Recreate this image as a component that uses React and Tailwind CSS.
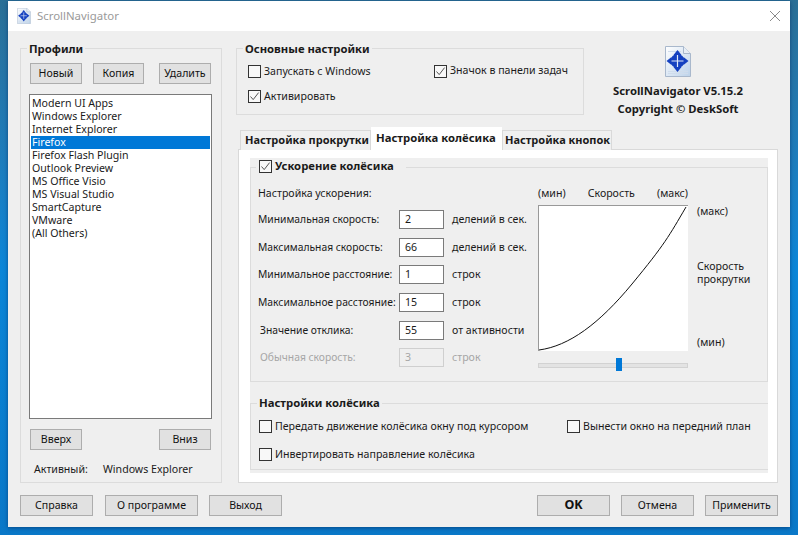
import React from 'react';

const profiles = [
  'Modern UI Apps',
  'Windows Explorer',
  'Internet Explorer',
  'Firefox',
  'Firefox Flash Plugin',
  'Outlook Preview',
  'MS Office Visio',
  'MS Visual Studio',
  'SmartCapture',
  'VMware',
  '(All Others)',
];

const speedRows = [
  { label: 'Минимальная скорость:', value: '2', unit: 'делений в сек.', top: 'mt-[10px]' },
  { label: 'Максимальная скорость:', value: '66', unit: 'делений в сек.', top: 'mt-[9px]' },
  { label: 'Минимальное расстояние:', value: '1', unit: 'строк', top: 'mt-[8px]' },
  { label: 'Максимальное расстояние:', value: '15', unit: 'строк', top: 'mt-[9px]' },
  { label: 'Значение отклика:', value: '55', unit: 'от активности', top: 'mt-[9px]', indent: true },
  { label: 'Обычная скорость:', value: '3', unit: 'строк', top: 'mt-[8px]', indent: true, disabled: true },
];

function Btn({ children, className = '', bold = false }) {
  return (
    <button
      className={`h-[21px] border border-[#adadad] bg-[#e1e1e1] text-[#111] flex items-center justify-center leading-none ${bold ? 'font-bold text-[12.5px]' : ''} ${className}`}
    >
      {children}
    </button>
  );
}

function Check({ checked, label, bold = false, className = '' }) {
  return (
    <div className={`flex items-center ${className}`}>
      <span className="w-[13px] h-[13px] border border-[#333] bg-[#f8f8f8] flex items-center justify-center shrink-0">
        {checked && (
          <svg width="11" height="11" viewBox="0 0 11 11" fill="none">
            <path d="M1.5 5.5 L4.2 8.6 L9.6 1.6" stroke="#555" strokeWidth="1" />
          </svg>
        )}
      </span>
      <span className={`ml-[3px] whitespace-nowrap ${bold ? 'font-bold' : ''}`}>{label}</span>
    </div>
  );
}

function AppIcon({ size = 26, height = 31, id = 'doc' }) {
  return (
    <svg className="shrink-0" width={size} height={height} viewBox="0 0 26 31">
      <defs>
        <linearGradient id={id} x1="0" y1="0" x2="1" y2="1">
          <stop offset="0" stopColor="#ffffff" />
          <stop offset="1" stopColor="#bcd2ea" />
        </linearGradient>
      </defs>
      <path d="M0.5 0.5 H18.5 L25.5 7.5 V30.5 H0.5 Z" fill={`url(#${id})`} stroke="#a9b8cc" />
      <path d="M18.5 0.5 V7.5 H25.5" fill="#e8eef5" stroke="#a9b8cc" />
      <path d="M3 5.5 H16 M3 25.5 H23 M3 27.5 H23" stroke="#cfdcec" strokeWidth="1" />
      {/* four arrows round a round hub */}
      <path d="M12.5 4 L16.5 9 H8.5 Z M12.5 26 L16.5 21 H8.5 Z M1.5 15 L6.5 11 V19 Z M23.5 15 L18.5 11 V19 Z" fill="#1541c0" />
      <circle cx="12.5" cy="15" r="7" fill="#1541c0" />
      <path d="M12.5 9 V21 M6.5 15 H18.5" stroke="#dfe8f8" strokeWidth="1.2" />
    </svg>
  );
}

function Group({ title, className = '', children }) {
  return (
    <div className={`border border-[#dcdcdc] ${className}`}>
      <div className="-mt-[7px] ml-[6px] w-fit px-[2px] bg-[#efefef] font-bold text-[11.3px] h-[16px] leading-[14px]">
        {title}
      </div>
      {children}
    </div>
  );
}

function SpeedRow({ row }) {
  const tone = row.disabled ? 'text-[#a6a6a6]' : 'text-[#1a1a1a]';
  return (
    <div className={`flex items-center h-[19px] ${row.top} ${tone}`}>
      <span className={`w-[141px] pt-px text-[10.3px] whitespace-nowrap ${row.indent ? 'pl-[2px]' : ''}`}>{row.label}</span>
      <span
        className={`w-[45px] h-[19px] border pl-[5px] leading-[17px] ${row.disabled ? 'border-[#cfcfcf] bg-[#efefef]' : 'border-[#7a7a7a] bg-white'}`}
      >
        {row.value}
      </span>
      <span className="ml-[8px] pt-px whitespace-nowrap">{row.unit}</span>
    </div>
  );
}

export default function App() {
  return (
    <div className="w-[798px] h-[535px] overflow-hidden bg-gradient-to-b from-[#2a6f96] via-[#0b86d8] to-[#0a78c8] pt-px pl-2 text-[10.6px] text-[#1a1a1a] font-['Noto_Sans','Open_Sans',sans-serif]">
      <div className="w-[782px] h-[526px] flex flex-col shadow-[0_1px_4px_rgba(0,40,90,0.6)]">
        {/* Title bar */}
        <div className="h-[30px] shrink-0 bg-white flex items-center pl-[9px] pr-[9px]">
          <AppIcon size={14} height={16} id="docSmall" />
          <span className="ml-[6px] text-[11.4px] text-[#9a9a9a]">ScrollNavigator</span>
          <svg className="ml-auto" width="12" height="12" viewBox="0 0 12 12" fill="none">
            <path d="M1 1 L11 11 M11 1 L1 11" stroke="#8a8a8a" strokeWidth="1" />
          </svg>
        </div>

        <div className="flex-1 bg-[#efefef] pl-3 pt-[17px]">
          <div className="flex h-[435px]">
            {/* Profiles */}
            <Group title="Профили" className="w-[202px] h-[435px]">
              <div className="pl-[9px]">
                <div className="flex mt-[5px]">
                  <Btn className="w-[52px]">Новый</Btn>
                  <Btn className="w-[51px] ml-[11px]">Копия</Btn>
                  <Btn className="w-[52px] ml-[15px]">Удалить</Btn>
                </div>
                <div className="w-[183px] h-[325px] -ml-px mt-[10px] border border-[#7a7a7a] bg-white py-[2px] px-px">
                  {profiles.map((p) => (
                    <div
                      key={p}
                      className={`h-[13px] leading-[13px] pl-px ${p === 'Firefox' ? 'bg-[#0078d7] text-white' : ''}`}
                    >
                      {p}
                    </div>
                  ))}
                </div>
                <div className="flex justify-between w-[181px] mt-[10px]">
                  <Btn className="w-[52px]">Вверх</Btn>
                  <Btn className="w-[52px]">Вниз</Btn>
                </div>
                <div className="flex mt-[12px] pl-[4px]">
                  <span className="w-[69px]">Активный:</span>
                  <span>Windows Explorer</span>
                </div>
              </div>
            </Group>

            {/* Right column */}
            <div className="ml-[14px] w-[542px] flex flex-col">
              <div className="flex h-[67px]">
                <Group title="Основные настройки" className="w-[348px] h-[67px]">
                  <div className="flex pl-[11px] mt-[6px]">
                    <div className="w-[186px]">
                      <Check label="Запускать с Windows" />
                      <Check checked label="Активировать" className="mt-[9px]" />
                    </div>
                    <Check checked label="Значок в панели задач" className="h-[16px] -mt-px" />
                  </div>
                </Group>
                <div className="flex-1 flex flex-col items-center pr-[6px] -mt-[2px] font-bold text-[11.3px]">
                  <AppIcon id="docLarge" />
                  <div className="mt-[5px] h-[18px] shrink-0 leading-[18px] whitespace-nowrap">ScrollNavigator V5.15.2</div>
                  <div className="h-[18px] shrink-0 leading-[18px] whitespace-nowrap">Copyright © DeskSoft</div>
                </div>
              </div>

              {/* Tabs */}
              <div className="flex items-end h-[23px] ml-[4px] mt-[12px] relative z-10 font-bold text-[11px]">
                <div className="w-[131px] h-[20px] border border-[#d9d9d9] border-b-0 bg-[#f0f0f0] pl-[4px] leading-[18px] whitespace-nowrap">Настройка прокрутки</div>
                <div className="w-[131px] h-[23px] bg-white pl-[5px] leading-[22px] text-[11.3px] whitespace-nowrap">Настройка колёсика</div>
                <div className="w-[110px] h-[20px] border border-[#d9d9d9] border-b-0 bg-[#f0f0f0] pl-[2px] leading-[18px] whitespace-nowrap">Настройка кнопок</div>
              </div>

              {/* Panel */}
              <div className="ml-[2px] h-[334px] -mt-px border border-[#d9d9d9] bg-white pl-[11px] pr-[9px] pt-[8px]">
                <div className="h-[315px] bg-[#efefef] pt-[9px]">
                  {/* Acceleration */}
                  <div className="h-[215px] border border-[#dcdcdc]">
                    <div className="-mt-[10px] ml-[5px] w-fit flex items-center bg-[#efefef] font-bold h-[16px] pr-[12px] text-[11.3px]">
                      <Check checked bold label="Ускорение колёсика" className="pl-[3px]" />
                    </div>
                    <div className="flex pl-[7px]">
                      <div className="w-[280px] pt-[12px]">
                        <div className="h-[14px] leading-[14px]">Настройка ускорения:</div>
                        <div>
                          {speedRows.map((row) => (
                            <SpeedRow key={row.label} row={row} />
                          ))}
                        </div>
                      </div>
                      <div className="w-[150px] pt-[12px]">
                        <div className="flex justify-between h-[14px] leading-[14px]">
                          <span>(мин)</span>
                          <span>Скорость</span>
                          <span>(макс)</span>
                        </div>
                        <div className="w-[150px] h-[146px] mt-[5px] bg-white border-t border-l border-[#999]">
                          <svg width="149" height="145" viewBox="0 0 149 145" fill="none">
                            <path d="M0 144 C30 140 60 118 93 78 S130 30 147 1" stroke="#111" strokeWidth="1" />
                          </svg>
                        </div>
                        <div className="relative h-[5px] mt-[12px] bg-[#e3e3e3] border border-[#d2d2d2]">
                          <div className="absolute left-[77px] -top-[6px] w-[6px] h-[13px] bg-[#0078d7]" />
                        </div>
                      </div>
                      <div className="ml-[9px] pt-[30px] flex flex-col h-[175px]">
                        <div className="h-[14px] leading-[14px]">(макс)</div>
                        <div className="mt-[42px] leading-[13px]">Скорость<br />прокрутки</div>
                        <div className="mt-[49px] h-[14px] leading-[14px]">(мин)</div>
                      </div>
                    </div>
                  </div>

                  {/* Wheel settings */}
                  <div className="mt-[21px] h-[67px] border-t border-l border-b border-[#dcdcdc] pl-[8px]">
                    <div className="-mt-[9px] w-fit px-[2px] -ml-[2px] bg-[#efefef] font-bold text-[11.3px] h-[16px] leading-[16px]">Настройки колёсика</div>
                    <div className="flex mt-[8px]">
                      <Check label="Передать движение колёсика окну под курсором" className="w-[308px]" />
                      <Check label="Вынести окно на передний план" />
                    </div>
                    <Check label="Инвертировать направление колёсика" className="mt-[12px]" />
                  </div>
                </div>
              </div>
            </div>
          </div>

          {/* Bottom buttons */}
          <div className="flex mt-[12px] w-[758px]">
            <Btn className="w-[73px]">Справка</Btn>
            <Btn className="w-[93px] ml-[12px]">О программе</Btn>
            <Btn className="w-[73px] ml-[11px]">Выход</Btn>
            <Btn bold className="w-[73px] ml-auto">OK</Btn>
            <Btn className="w-[73px] ml-[11px]">Отмена</Btn>
            <Btn className="w-[73px] ml-[11px]">Применить</Btn>
          </div>
        </div>
      </div>
    </div>
  );
}
